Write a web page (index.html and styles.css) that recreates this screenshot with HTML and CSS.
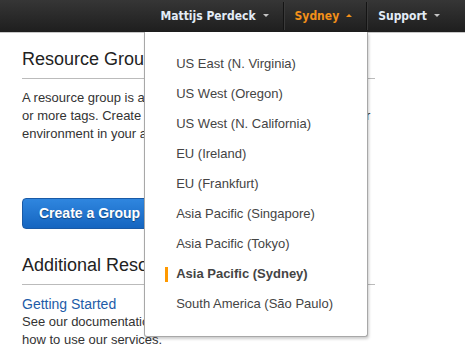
FILE: index.html
```html
<!DOCTYPE html>
<html lang="en">
<head>
    <meta charset="UTF-8">
    <title>Resource Groups</title>
    <link rel="stylesheet" href="styles.css">
</head>
<body>
    <div class="topbar">
        <div class="nav-item">Mattijs Perdeck<span class="caret"></span></div>
        <div class="nav-sep"></div>
        <div class="nav-item active">Sydney<span class="caret up"></span>
            <ul class="region-menu">
                <li>US East (N. Virginia)</li>
                <li>US West (Oregon)</li>
                <li>US West (N. California)</li>
                <li>EU (Ireland)</li>
                <li>EU (Frankfurt)</li>
                <li>Asia Pacific (Singapore)</li>
                <li>Asia Pacific (Tokyo)</li>
                <li class="selected">Asia Pacific (Sydney)</li>
                <li>South America (São Paulo)</li>
            </ul>
        </div>
        <div class="nav-sep"></div>
        <div class="nav-item">Support<span class="caret"></span></div>
    </div>

    <div class="main">
        <h2>Resource Groups</h2>
        <p>A resource group is a set of resources that share one<br>
           or more tags. Create a group for each project, application, or<br>
           environment in your account.</p>

        <a class="btn-primary" href="#">Create a Group</a>

        <h2>Additional Resources</h2>
        <a class="link" href="#">Getting Started</a>
        <p>See our documentation to learn about resource groups and<br>
           how to use our services.</p>
    </div>
</body>
</html>
```

FILE: styles.css
```css
* {
    margin: 0;
    padding: 0;
    box-sizing: border-box;
}

body {
    background: #fff;
    font-family: 'Liberation Sans', Arial, sans-serif;
    color: #333;
}

/* Top navigation */
.topbar {
    display: flex;
    justify-content: flex-end;
    align-items: center;
    height: 33px;
    padding-right: 11px;
    background: linear-gradient(#363636, #1e1e1e);
    border-bottom: 1px solid #c8c8c8;
}

.nav-item {
    position: relative;
    padding: 0 14px 0 10px;
    font-family: 'DejaVu Sans Condensed', 'DejaVu Sans', Tahoma, sans-serif;
    font-size: 12px;
    font-weight: bold;
    color: #e3ecf7;
    line-height: 28px;
}

.nav-item.active {
    color: #f39019;
}

.caret {
    display: inline-block;
    vertical-align: middle;
    margin: -2px 0 0 7px;
    border-left: 3px solid transparent;
    border-right: 3px solid transparent;
    border-top: 3px solid #c4c4c4;
}

.caret.up {
    border-top: none;
    border-bottom: 3px solid #f39019;
}

.nav-sep {
    width: 2px;
    height: 28px;
    background: #141414;
    border-right: 1px solid #3a3a3a;
}

/* Region dropdown */
.region-menu {
    position: absolute;
    top: 30px;
    right: -2px;
    width: 224px;
    height: 305px;
    list-style: none;
    padding: 17px 0 0;
    background: #fff;
    border: 1px solid #a8a8a8;
    border-top: none;
    border-radius: 0 0 3px 3px;
    box-shadow: 1px 2px 3px rgba(0, 0, 0, 0.2);
    z-index: 10;
    font-family: 'Liberation Sans', Arial, sans-serif;
    font-weight: normal;
}

.region-menu li {
    position: relative;
    padding-left: 31px;
    font-size: 13px;
    line-height: 30px;
    color: #444;
}

.region-menu li.selected {
    font-weight: bold;
}

.region-menu li.selected:before {
    content: '';
    position: absolute;
    left: 20px;
    top: 8px;
    width: 3px;
    height: 15px;
    background: #f90;
}

/* Main content */
.main {
    width: 375px;
    padding: 16px 0 0 22px;
}

.main h2 {
    font-size: 18px;
    font-weight: normal;
    color: #222;
    padding-bottom: 8px;
    border-bottom: 1px solid #bbb;
    margin-bottom: 10px;
}

.main p {
    font-size: 13px;
    line-height: 18px;
    color: #333;
    white-space: nowrap;
}

.btn-primary {
    display: inline-block;
    margin: 55px 0 26px;
    padding: 0 16px;
    height: 31px;
    line-height: 29px;
    font-size: 14px;
    font-weight: bold;
    color: #fff;
    text-decoration: none;
    text-shadow: 0 1px 1px rgba(0, 0, 0, 0.4);
    background: linear-gradient(#2f86df, #1565c0);
    border: 1px solid #1a5aa6;
    border-radius: 4px;
}

.link {
    display: block;
    margin-top: 9px;
    font-size: 14px;
    color: #1e5ca8;
    text-decoration: none;
    line-height: 18px;
}
```
